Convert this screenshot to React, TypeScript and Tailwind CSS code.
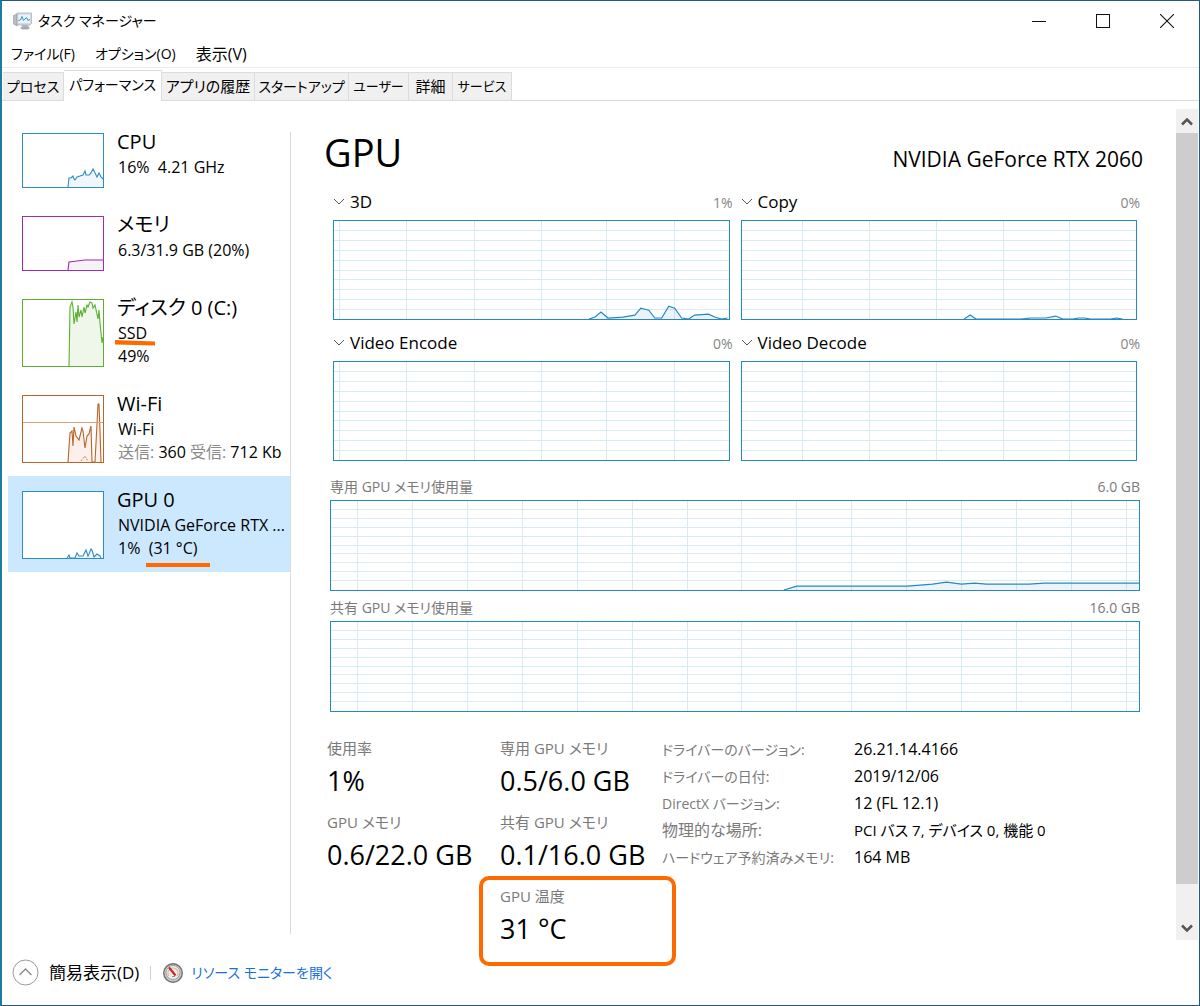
import clsx from "clsx";
import { ReactNode } from "react";

type Point = [number, number];

type Device = {
  name: string;
  lines: ReactNode[];
  stroke: string;
  fill: string;
  height: number;
  points: Point[];
  active?: boolean;
};

type Engine = {
  name: string;
  usage: string;
  columns: number[];
  points: Point[];
};

const menus = [
  { text: "ファイル(F)", size: "text-[14px]" },
  { text: "オプション(O)", size: "text-[14px]" },
  { text: "表示(V)", size: "text-[16px]" },
];

const tabs = [
  { text: "プロセス", style: "w-[61px] text-[14px]" },
  { text: "パフォーマンス", style: "w-[98px] text-[14px]", active: true },
  { text: "アプリの履歴", style: "w-[93px] text-[15px]" },
  { text: "スタートアップ", style: "w-[94px] text-[14px]" },
  { text: "ユーザー", style: "w-[60px] text-[13px]" },
  { text: "詳細", style: "w-[44px] text-[15px]" },
  { text: "サービス", style: "w-[59px] text-[13px]" },
];

const devices: Device[] = [
  {
    name: "CPU",
    lines: ["16%  4.21 GHz"],
    stroke: "#2a8dc8",
    fill: "#f1f6fa",
    height: 55,
    points: [
      [46, 54], [47, 45], [49, 45], [51, 43], [52, 46], [53, 47], [55, 44],
      [58, 43], [61, 42], [63, 38], [64, 42], [67, 42], [69, 40], [71, 36],
      [73, 40], [75, 44], [77, 40], [79, 44], [81, 46],
    ],
  },
  {
    name: "メモリ",
    lines: ["6.3/31.9 GB (20%)"],
    stroke: "#9a2bbd",
    fill: "#f4f2f4",
    height: 55,
    points: [[46, 54], [47, 46], [55, 45], [63, 44], [67, 44], [75, 44], [81, 44]],
  },
  {
    name: "ディスク 0 (C:)",
    lines: ["SSD", "49%"],
    stroke: "#5bb02f",
    fill: "#eff6ea",
    height: 68,
    points: [
      [47, 67], [48, 8], [50, 3], [51, 8], [52, 25], [54, 13], [55, 23],
      [56, 6], [57, 18], [59, 11], [60, 18], [62, 8], [63, 14], [65, 6],
      [66, 8], [68, 3], [70, 4], [71, 9], [73, 6], [76, 20], [77, 11],
      [78, 24], [80, 44], [81, 38],
    ],
  },
  {
    name: "Wi-Fi",
    lines: [
      "Wi-Fi",
      <>
        <span className="text-[#8a8a8a]">送信:</span> 360{" "}
        <span className="text-[#8a8a8a]">受信:</span> 712 Kb
      </>,
    ],
    stroke: "#b9642a",
    fill: "#fbf1ea",
    height: 68,
    points: [
      [46, 67], [48, 38], [50, 36], [51, 51], [52, 32], [54, 41], [57, 45],
      [60, 33], [61, 36], [63, 53], [65, 41], [67, 39], [69, 31], [70, 67],
      [73, 67], [75, 29], [76, 9], [77, 9], [78, 36], [79, 67],
    ],
  },
  {
    name: "GPU 0",
    lines: ["NVIDIA GeForce RTX ...", "1%  (31 °C)"],
    stroke: "#2a8dc8",
    fill: "#f1f6fa",
    height: 68,
    active: true,
    points: [
      [45, 67], [47, 64], [48, 67], [53, 67], [55, 62], [57, 65], [61, 65],
      [64, 59], [66, 65], [67, 63], [69, 58], [70, 59], [72, 66], [75, 63],
      [78, 65], [79, 67],
    ],
  },
];

const leftColumns = [6, 73, 141, 208, 274, 342];
const rightColumns = [61, 128, 195, 262, 329];

const engines: Engine[] = [
  {
    name: "3D",
    usage: "1%",
    columns: leftColumns,
    points: [
      [256, 100], [262, 98], [268, 93], [275, 99], [290, 98], [302, 96],
      [308, 89], [316, 91], [322, 99], [329, 99], [336, 87], [342, 89],
      [349, 99], [356, 100], [362, 96], [376, 95], [382, 98], [389, 100],
      [395, 99],
    ],
  },
  {
    name: "Copy",
    usage: "0%",
    columns: rightColumns,
    points: [
      [223, 100], [229, 96], [235, 100], [280, 100], [290, 99], [305, 99],
      [315, 97], [322, 100], [332, 100], [338, 99], [344, 99], [350, 100],
      [370, 100], [376, 99], [382, 100],
    ],
  },
  { name: "Video Encode", usage: "0%", columns: leftColumns, points: [] },
  { name: "Video Decode", usage: "0%", columns: rightColumns, points: [] },
];

const memoryColumns = Array.from({ length: 15 }, (_, i) => 27 + i * 55);

const dedicatedPoints: Point[] = [
  [454, 91], [467, 87], [578, 87], [603, 85], [617, 83], [632, 85],
  [645, 84], [657, 85], [700, 85], [715, 84], [810, 84],
];

const details = [
  { label: "ドライバーのバージョン:", value: "26.21.14.4166" },
  { label: "ドライバーの日付:", value: "2019/12/06" },
  { label: "DirectX バージョン:", value: "12 (FL 12.1)" },
  { label: "物理的な場所:", value: "PCI バス 7, デバイス 0, 機能 0", kanji: true },
  { label: "ハードウェア予約済みメモリ:", value: "164 MB" },
];

const toLine = (points: Point[]) => points.map((p) => p.join(",")).join(" ");

const toArea = (points: Point[], bottom: number) =>
  `${points[0][0]},${bottom} ${toLine(points)} ${
    points[points.length - 1][0]
  },${bottom}`;

const Chart = ({
  width,
  height,
  rowStep,
  columns,
  points,
  className,
}: {
  width: number;
  height: number;
  rowStep: number;
  columns: number[];
  points: Point[];
  className: string;
}) => (
  <svg
    viewBox={`0 0 ${width} ${height}`}
    preserveAspectRatio="none"
    className={clsx("block w-full border border-[#2389c5] bg-white", className)}
    aria-hidden="true"
  >
    <g stroke="#d9eaf4" shapeRendering="crispEdges">
      {columns.map((x) => (
        <line key={x} x1={x} x2={x} y1="0" y2={height} vectorEffect="non-scaling-stroke" />
      ))}
      {Array.from({ length: 9 }, (_, i) => (i + 1) * rowStep).map((y) => (
        <line key={y} x1="0" x2={width} y1={y} y2={y} vectorEffect="non-scaling-stroke" />
      ))}
    </g>
    {points.length > 0 && (
      <>
        <polygon points={toArea(points, height)} fill="#1179b8" fillOpacity="0.08" />
        <polyline
          points={toLine(points)}
          fill="none"
          stroke="#2389c5"
          strokeWidth="1.2"
          vectorEffect="non-scaling-stroke"
        />
      </>
    )}
  </svg>
);

const Thumbnail = ({ device }: { device: Device }) => {
  const { height, stroke, fill, points, name } = device;
  return (
    <svg width="82" height={height} className="block shrink-0" aria-hidden="true">
      <rect x="0.5" y="0.5" width="81" height={height - 1} fill="#fff" />
      <polygon points={toArea(points, height - 1)} fill={fill} />
      <polyline points={toLine(points)} fill="none" stroke={stroke} strokeWidth="1.1" />
      {name === "Wi-Fi" && (
        <>
          <line x1="1" x2="81" y1="27.5" y2="27.5" stroke="#d9a37c" />
          <polyline points="59,66 63,61 66,66" fill="none" stroke={stroke} strokeDasharray="1 1" />
        </>
      )}
      <rect x="0.5" y="0.5" width="81" height={height - 1} fill="none" stroke={stroke} />
    </svg>
  );
};

const Stat = ({ label, value }: { label: string; value: string }) => (
  <div>
    <dt className="text-[15px] leading-6 text-[#7a7a7a]">{label}</dt>
    <dd className="text-[27px] leading-[42px]">{value}</dd>
  </div>
);

const AppIcon = () => (
  <svg width="19" height="18" viewBox="0 0 19 18" aria-hidden="true">
    <path d="M0.5 3.5 4 2v12L0.5 12z" fill="#b9c0c4" stroke="#8b9499" strokeWidth="0.6" />
    <path d="M8 12h7l1 4.500H9.500z" fill="#b7bcbf" />
    <ellipse cx="12" cy="16" rx="4.500" ry="1.500" fill="#a4abaf" />
    <path d="M4 1h14.500v10.500L17 13H4z" fill="#d5dadd" stroke="#9aa3a8" strokeWidth="0.6" />
    <path d="M5.500 2.500h11.500v8.500H5.500z" fill="#e6f3fb" />
    <path d="M5.500 8.500 7.500 8 9 4.500l1.500 4L12 7l1.500-1.500L15 8.500l2-1" fill="none" stroke="#3b8fd0" />
  </svg>
);

const GaugeIcon = () => (
  <svg width="22" height="22" viewBox="0 0 22 22" aria-hidden="true">
    <circle cx="11" cy="11" r="9.300" fill="#c9cbc9" stroke="#6f7272" strokeWidth="1.400" />
    <circle cx="11" cy="10.500" r="7" fill="#f3ece6" stroke="#9da19f" />
    <path d="M7 14a5 5 0 1 1 8 0" fill="none" stroke="#dfb49f" strokeWidth="1.200" />
    <path d="M7 5.500 13.500 13.500" stroke="#c8202a" strokeWidth="2" />
    <path d="M10 14.500h3" stroke="#8f9493" />
  </svg>
);

const App = () => (
  <div className="flex min-h-screen flex-col border border-l-2 border-[#245a7c] border-l-[#1d7ba6] bg-white text-black [font-family:'Open_Sans','Noto_Sans_CJK_JP',sans-serif] [font-feature-settings:'palt']">
    <header className="flex h-[39px] items-center justify-between pl-[11px]">
      <div className="flex items-center gap-[6px]">
        <AppIcon />
        <h1 className="text-[14px] leading-6">タスク マネージャー</h1>
      </div>
      <div className="flex">
        <button type="button" aria-label="最小化" className="flex h-9 w-16 items-center justify-center">
          <svg width="14" height="14" shapeRendering="crispEdges">
            <path d="M0 7.500h14" stroke="#111" />
          </svg>
        </button>
        <button type="button" aria-label="最大化" className="flex h-9 w-16 items-center justify-center">
          <svg width="14" height="14" shapeRendering="crispEdges">
            <path d="M0.500 0.500h13v13h-13z" fill="none" stroke="#111" />
          </svg>
        </button>
        <button type="button" aria-label="閉じる" className="flex h-9 w-16 items-center justify-center">
          <svg width="14" height="14">
            <path d="M0 0 14 14M14 0 0 14" stroke="#111" strokeWidth="1.100" />
          </svg>
        </button>
      </div>
    </header>

    <nav className="flex h-7 items-center gap-5 border-b border-[#ececec] pl-[9px]">
      {menus.map(({ text, size }) => (
        <button key={text} type="button" className={clsx("leading-6", size)}>
          {text}
        </button>
      ))}
    </nav>

    <div role="tablist" className="flex h-[33px] items-end border-b border-[#dcdcdc] pl-px">
      {tabs.map(({ text, style, active }) => (
        <button
          key={text}
          type="button"
          role="tab"
          aria-selected={!!active}
          className={clsx(
            "shrink-0 border-t border-r border-[#dcdcdc] text-center whitespace-nowrap",
            style,
            active && "-mb-px h-[31px] bg-white pb-1",
            !active && "h-[28px] bg-[#f0f0f0]"
          )}
        >
          {text}
        </button>
      ))}
    </div>

    <div className="flex grow">
      <aside className="flex w-[288px] shrink-0 flex-col pl-[6px]">
        <ul className="mt-[17px]">
          {devices.map((device) => (
            <li key={device.name} className="relative">
              <button
                type="button"
                className={clsx(
                  "flex w-full gap-[13px] overflow-hidden pl-[14px] text-left",
                  device.height === 55 ? "h-[83px]" : "h-24",
                  device.active && "bg-[#cce8ff]"
                )}
              >
                <span className="pt-[15px]">
                  <Thumbnail device={device} />
                </span>
                <span className="pt-[10px] whitespace-pre">
                  <span className="block text-[20px] leading-7">{device.name}</span>
                  {device.lines.map((line, idx) => (
                    <span key={idx} className="block pl-px text-[16px] leading-[23px]">
                      {line}
                    </span>
                  ))}
                </span>
              </button>
              {device.lines[0] === "SSD" && (
                <svg width="40" height="6" className="absolute top-[56px] left-[107px]">
                  <path d="M0 0 40 1.500V5.500L0 4.500z" fill="#ff6a00" />
                </svg>
              )}
              {device.active && (
                <span className="absolute top-[87px] left-[138px] h-1 w-16 bg-[#ff6a00]" />
              )}
            </li>
          ))}
        </ul>
      </aside>
      <div className="mt-[31px] mb-[6px] w-px shrink-0 bg-[#dadada]" />

      <main className="grow pr-[36px] pl-9">
        <div className="flex items-baseline justify-between pt-[26px]">
          <h2 className="-ml-[3px] text-[38px] leading-[50px]">GPU</h2>
          <p className="-mr-[3px] text-[21px]">NVIDIA GeForce RTX 2060</p>
        </div>

        <div className="mt-[7px] grid grid-cols-2 gap-x-[11px] gap-y-[5px] pr-[3px] pl-[6px]">
          {engines.map(({ name, usage, columns, points }) => (
            <section key={name}>
              <div className="flex h-9 items-center justify-between">
                <button type="button" className="flex items-center gap-[5px] text-[17px]">
                  <svg width="12" height="8" aria-hidden="true">
                    <path d="M1 1 6 6 11 1" fill="none" stroke="#555" />
                  </svg>
                  {name}
                </button>
                <span className="-mr-[3px] text-[14px] text-[#858585]">{usage}</span>
              </div>
              <Chart
                width={396}
                height={100}
                rowStep={10}
                columns={columns}
                points={points}
                className="h-[100px]"
              />
            </section>
          ))}
        </div>

        <div className="flex flex-col gap-[3px] pt-3 pl-[3px]">
          <section>
            <div className="flex h-[27px] items-center justify-between text-[14px] text-[#7a7a7a]">
              <h3>専用 GPU メモリ使用量</h3>
              <span>6.0 GB</span>
            </div>
            <Chart
              width={810}
              height={91}
              rowStep={9}
              columns={memoryColumns}
              points={dedicatedPoints}
              className="h-[91px]"
            />
          </section>
          <section>
            <div className="flex h-[27px] items-center justify-between text-[14px] text-[#7a7a7a]">
              <h3>共有 GPU メモリ使用量</h3>
              <span>16.0 GB</span>
            </div>
            <Chart
              width={810}
              height={91}
              rowStep={9}
              columns={memoryColumns}
              points={[]}
              className="h-[91px]"
            />
          </section>
        </div>

        <div className="mt-6 -mb-4 grid grid-cols-[173px_162px_auto] whitespace-nowrap">
          <dl className="flex flex-col gap-2">
            <Stat label="使用率" value="1%" />
            <Stat label="GPU メモリ" value="0.6/22.0 GB" />
          </dl>
          <dl className="flex flex-col gap-2">
            <Stat label="専用 GPU メモリ" value="0.5/6.0 GB" />
            <Stat label="共有 GPU メモリ" value="0.1/16.0 GB" />
            <div className="relative">
              <Stat label="GPU 温度" value="31 °C" />
              <span className="absolute -top-2 -left-[21px] h-[90px] w-[197px] rounded-[10px] border-4 border-[#ff6a00]" />
            </div>
          </dl>
          <table className="self-start">
            <tbody>
              {details.map(({ label, value, kanji }) => (
                <tr key={label} className="leading-[27px]">
                  <th
                    scope="row"
                    className={clsx(
                      "w-48 p-0 text-left font-normal text-[#7a7a7a]",
                      kanji ? "text-[16px]" : "text-[14px]"
                    )}
                  >
                    {label}
                  </th>
                  <td className={clsx("p-0", kanji ? "text-[15px]" : "text-[16px]")}>{value}</td>
                </tr>
              ))}
            </tbody>
          </table>
        </div>
      </main>

      <div className="mt-2 mr-px flex w-[22px] shrink-0 flex-col bg-[#f0f0f0]">
        <button type="button" aria-label="上へスクロール" className="flex h-6 items-center justify-center">
          <svg width="12" height="9">
            <path d="M1 7.500 6 2.500 11 7.500" fill="none" stroke="#555" strokeWidth="2.500" />
          </svg>
        </button>
        <div className="grow bg-[#cdcdcd]" />
        <button type="button" aria-label="下へスクロール" className="flex h-14 items-end justify-center pb-[7px]">
          <svg width="12" height="9">
            <path d="M1 1.500 6 6.500 11 1.500" fill="none" stroke="#555" strokeWidth="2.500" />
          </svg>
        </button>
      </div>
    </div>

    <footer className="flex h-[65px] items-center pl-[10px]">
      <button type="button" className="flex items-center gap-[10px] text-[17px]">
        <svg width="27" height="27" aria-hidden="true">
          <circle cx="13.500" cy="13.500" r="12.500" fill="#fff" stroke="#9a9a9a" />
          <path d="M7.500 16 13.500 10 19.500 16" fill="none" stroke="#888" strokeWidth="1.300" />
        </svg>
        簡易表示(D)
      </button>
      <div className="mx-[11px] h-[14px] w-px bg-[#d0d0d0]" />
      <a href="#resource-monitor" className="flex items-center gap-[7px] text-[14px] text-[#1a70dc]">
        <GaugeIcon />
        リソース モニターを開く
      </a>
    </footer>
  </div>
);

export default App;
